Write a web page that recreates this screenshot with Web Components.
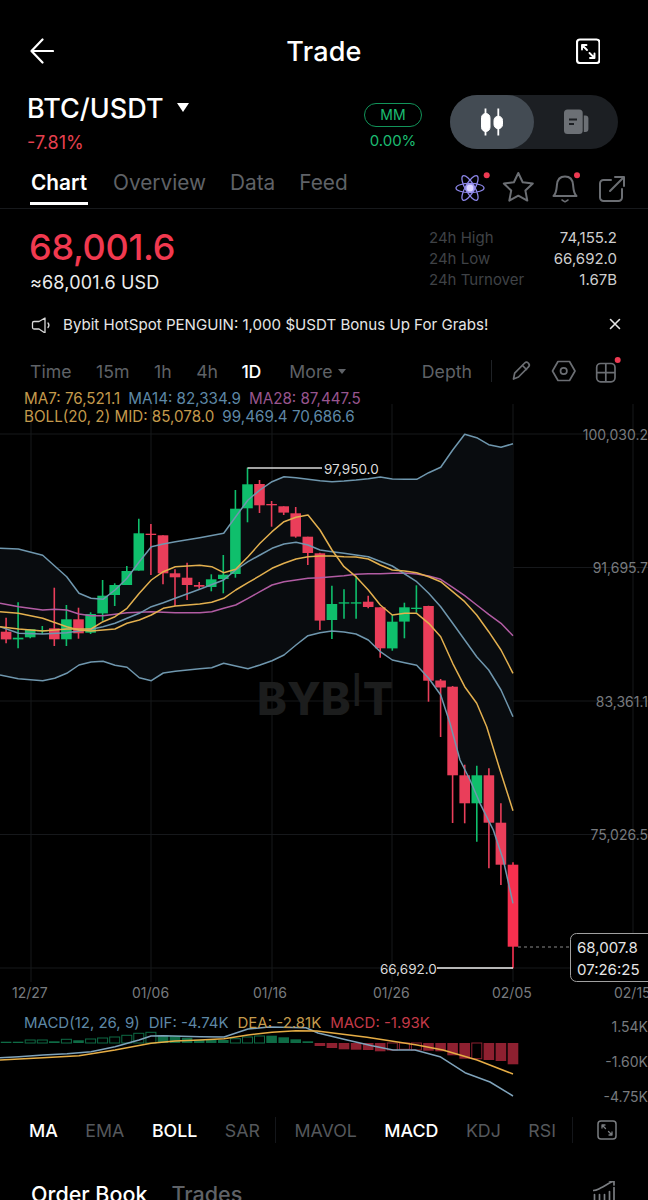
<!DOCTYPE html>
<html>
<head>
<meta charset="utf-8">
<title>Trade</title>
<style>
  html, body { margin: 0; background: #000; height: 1200px; overflow: hidden; }
  body { font-family: Inter, "Liberation Sans", sans-serif; color: #fff; }
</style>
</head>
<body>
<trade-header></trade-header>
<pair-bar></pair-bar>
<tab-bar></tab-bar>
<price-panel></price-panel>
<notice-bar>Bybit HotSpot PENGUIN: 1,000 $USDT Bonus Up For Grabs!</notice-bar>
<interval-bar></interval-bar>
<kline-chart></kline-chart>
<macd-panel></macd-panel>
<indicator-bar></indicator-bar>
<book-tabs></book-tabs>

<script>
 const GRAY = '#5f6267';

 customElements.define('trade-header', class extends HTMLElement {
     constructor() {
         super();
         this.attachShadow({ mode: 'open' }).innerHTML = `
         <style>
          :host { display: grid; grid-template-columns: 1fr auto 1fr; align-items: center; height: 52px; padding: 25px 48px 0 30px; }
          h1 { margin: 0; font-size: 27px; font-weight: 500; letter-spacing: .2px; transform: translateX(9px); }
          svg { display: block; }
          .end { justify-self: end; }
         </style>
         <svg width="24" height="26" viewBox="30 38 24 26" fill="none" stroke="#fff" stroke-width="2.2" stroke-linecap="round" stroke-linejoin="round">
          <path d="M53 51H31.5M42.5 39.5 31.5 51l11 11.5"/>
         </svg>
         <h1>Trade</h1>
         <svg class="end" width="24" height="26" viewBox="576 38 24 26" fill="none" stroke="#fff" stroke-linecap="round" stroke-linejoin="round">
          <rect x="577" y="39.5" width="22.5" height="23.5" rx="3" stroke-width="2.2"/>
          <path stroke-width="1.9" d="M582 45h4.5M582 45v4.5M582 45l5 5M594.5 58H590M594.5 58v-4.5M594.5 58l-5-5"/>
         </svg>`;
     }
 });

 customElements.define('pair-bar', class extends HTMLElement {
     constructor() {
         super();
         this.attachShadow({ mode: 'open' }).innerHTML = `
         <style>
          :host { display: flex; align-items: flex-start; height: 88px; padding-left: 27px; box-sizing: border-box; }
          .pair { flex: 1; padding-top: 15px; }
          .name { display: flex; align-items: center; gap: 13px; font-size: 27px; line-height: 34px; font-weight: 500; }
          .caret { width: 0; height: 0; border: 6.5px solid transparent; border-top: 9px solid #fff; border-bottom: 0; margin-top: -4px; }
          .chg { margin-top: 6px; color: #e5404f; font-size: 18px; line-height: 22px; }
          .mm { width: 58px; margin: 26px 28px 0 0; text-align: center; color: #1cbd72; font-size: 15px; }
          .pill { box-sizing: border-box; height: 24px; border: 1px solid #12945a; border-radius: 12px; font-size: 14px; line-height: 22px; margin-bottom: 3px; }
          .pct { line-height: 22px; }
          .toggle { display: flex; width: 168px; height: 54px; margin: 18px 30px 0 0; background: #1c1f23; border-radius: 27px; }
          .on { display: flex; align-items: center; justify-content: center; width: 84px; background: #434b53; border-radius: 27px; }
          .off { flex: 1; display: flex; align-items: center; justify-content: center; }
         </style>
         <div class="pair">
          <div class="name">BTC/USDT<span class="caret"></span></div>
          <div class="chg">-7.81%</div>
         </div>
         <div class="mm">
          <div class="pill">MM</div>
          <div class="pct">0.00%</div>
         </div>
         <div class="toggle">
          <div class="on">
           <svg width="24" height="28" viewBox="479 108.5 24 28" fill="#fff" stroke="#fff">
            <path stroke-width="1.8" d="M484.5 109v27M497.3 109v27"/>
            <rect x="480.5" y="114" width="8.5" height="18" rx="4.2"/>
            <rect x="493" y="116.7" width="8.5" height="12.5" rx="4.2"/>
           </svg>
          </div>
          <div class="off">
           <svg width="25" height="26" viewBox="563 110 25 26" fill="#6c7075">
            <rect x="563" y="110.5" width="18.7" height="24.5" rx="3.5"/>
            <path d="M582.8 116.5h1.6a3 3 0 0 1 3 3V130a3 3 0 0 1-3 3h-1.6z"/>
            <path stroke="#1c1f23" stroke-width="2" d="M568 120.5h8M568 125h5"/>
           </svg>
          </div>
         </div>`;
     }
 });

 customElements.define('tab-bar', class extends HTMLElement {
     constructor() {
         super();
         this.attachShadow({ mode: 'open' }).innerHTML = `
         <style>
          :host { display: flex; align-items: flex-end; height: 44px; box-sizing: border-box; border-bottom: 1px solid #17191c; padding: 0 20px 0 30px; }
          .tabs { flex: 1; display: flex; gap: 24px; align-self: stretch; }
          .tab { color: ${GRAY}; font-size: 20.8px; line-height: 36px; height: 40px; box-sizing: border-box; }
          .tab.on { color: #fff; font-weight: 600; border-bottom: 3px solid #fff; width: 58px; text-align: center; white-space: nowrap; margin-right: 1px; }
          .tools { display: flex; align-self: center; }
          svg { display: block; }
         </style>
         <div class="tabs">
          <span class="tab on">Chart</span>
          <span class="tab">Overview</span>
          <span class="tab">Data</span>
          <span class="tab">Feed</span>
         </div>
         <div class="tools">
          <svg width="38" height="34" viewBox="452 166 38 34" fill="none" stroke="#8c86e8" stroke-width="1.3">
           <ellipse cx="470" cy="184" rx="14" ry="4.6"/>
           <ellipse cx="470" cy="184" rx="14" ry="4.6" transform="rotate(60 470 184)"/>
           <ellipse cx="470" cy="184" rx="14" ry="4.6" transform="rotate(-60 470 184)"/>
           <circle cx="470" cy="184" r="4" fill="#d9d4ff" stroke="#a59cf5"/>
           <circle cx="486.7" cy="171.3" r="3" fill="#ee3a52" stroke="none"/>
          </svg>
          <svg style="margin-left:10px" width="36" height="34" viewBox="500 166 36 34" fill="none" stroke="#6b6e73" stroke-width="2" stroke-linejoin="round">
           <path d="M518.3 169l4.4 9.3 10.1 1.3-7.4 7 1.9 10-9-4.9-9 4.9 1.9-10-7.4-7 10.1-1.3z"/>
          </svg>
          <svg style="margin-left:12px" width="34" height="34" viewBox="548 166 34 34" fill="none" stroke="#6b6e73" stroke-width="2" stroke-linecap="round" stroke-linejoin="round">
           <path d="M553.5 192c3-3 3-6 3.4-11 .4-5.5 3.6-8.5 8.1-8.5s7.7 3 8.1 8.5c.4 5 .4 8 3.4 11z"/>
           <path stroke-width="1.5" d="M562 196l3 1.8 3-1.8"/>
           <circle cx="577" cy="171.3" r="3" fill="#ee3a52" stroke="none"/>
          </svg>
          <svg style="margin-left:14px" width="32" height="34" viewBox="596 166 32 34" fill="none" stroke="#6b6e73" stroke-width="2" stroke-linecap="round" stroke-linejoin="round">
           <path d="M611 176h-7.5a3.500 3.500 0 0 0-3.500 3.500v14a3.500 3.500 0 0 0 3.500 3.500h15a3.500 3.500 0 0 0 3.500-3.500V185"/>
           <path d="M610 187l13.500-13.500M615 173h9v9"/>
          </svg>
         </div>`;
     }
 });

 customElements.define('price-panel', class extends HTMLElement {
     constructor() {
         super();
         this.attachShadow({ mode: 'open' }).innerHTML = `
         <style>
          :host { display: flex; justify-content: space-between; height: 95px; padding: 15px 31px 0 29px; box-sizing: border-box; }
          .last { color: #f1394f; font-size: 36px; line-height: 46px; font-weight: 500; letter-spacing: -.3px; }
          .usd { font-size: 18px; line-height: 26px; color: #ececec; margin-left: 1px; letter-spacing: .15px; }
          .stats { display: grid; grid-template-columns: auto auto; align-content: start; width: 188px; justify-content: space-between; font-size: 15px; line-height: 21px; margin-top: 3px; }
          .k { color: #3f4246; }
          .v { color: #cfcfcf; text-align: right; }
         </style>
         <div>
          <div class="last">68,001.6</div>
          <div class="usd">≈68,001.6 USD</div>
         </div>
         <div class="stats">
          <span class="k">24h High</span><span class="v">74,155.2</span>
          <span class="k">24h Low</span><span class="v">66,692.0</span>
          <span class="k">24h Turnover</span><span class="v">1.67B</span>
         </div>`;
     }
 });

 customElements.define('notice-bar', class extends HTMLElement {
     constructor() {
         super();
         this.attachShadow({ mode: 'open' }).innerHTML = `
         <style>
          :host { display: flex; align-items: center; height: 40px; padding: 0 27px 0 31px; color: #e6e6e6; font-size: 15.1px; }
          svg { display: block; flex: none; }
          .txt { flex: 1; margin-left: 12px; }
         </style>
         <svg width="20" height="18" viewBox="31 315 20 18" fill="none" stroke="#d8d8d8" stroke-width="1.3" stroke-linejoin="round" stroke-linecap="round">
          <path d="M45 318v15l-6-4h-5a1.500 1.500 0 0 1-1.500-1.500v-4.500a1.500 1.500 0 0 1 1.500-1.500h5z"/>
          <path d="M48 323a3.500 3.500 0 0 1 0 4.500"/>
         </svg>
         <span class="txt"><slot></slot></span>
         <svg width="12" height="12" viewBox="0 0 12 12" fill="none" stroke="#e6e6e6" stroke-width="1.6" stroke-linecap="round">
          <path d="M1.500 1.500l9 9M10.500 1.500l-9 9"/>
         </svg>`;
     }
 });

 customElements.define('interval-bar', class extends HTMLElement {
     constructor() {
         super();
         this.attachShadow({ mode: 'open' }).innerHTML = `
         <style>
          :host { display: flex; align-items: center; height: 46px; padding: 8px 27px 0 30px; box-sizing: border-box; font-size: 17.7px; color: ${GRAY}; }
          .times { flex: 1; display: flex; gap: 24.5px; align-items: center; }
          .on { color: #fff; font-weight: 500; margin-left: -1px; letter-spacing: -.4px; }
          .more { display: flex; align-items: center; gap: 5px; margin-left: 4px; }
          .more i { width: 0; height: 0; border: 4.5px solid transparent; border-top: 5.5px solid ${GRAY}; border-bottom: 0; }
          .sep { width: 1px; height: 22px; background: #1f2226; margin: 0 4px 0 19px; }
          svg { display: block; }
         </style>
         <div class="times">
          <span>Time</span><span>15m</span><span>1h</span><span>4h</span><span class="on">1D</span>
          <span class="more">More<i></i></span>
         </div>
         <span>Depth</span>
         <span class="sep"></span>
         <svg style="margin-left:14px" width="23" height="26" viewBox="510 358 23 26" fill="none" stroke="#6b6e73" stroke-width="1.7" stroke-linejoin="round" stroke-linecap="round">
          <path d="M513.500 379l1.200-5.800 10-10.200a2.500 2.500 0 0 1 3.500 0l.3.300a2.500 2.500 0 0 1 0 3.500l-10 10.200z"/>
          <path d="M522.500 365.500l4 4"/>
         </svg>
         <svg style="margin-left:18px" width="26" height="26" viewBox="551 358 26 26" fill="none" stroke="#6b6e73" stroke-width="1.7" stroke-linejoin="round">
          <path d="M558 361.500h11.500l5.500 9.500-5.500 9.500H558l-5.500-9.500z"/>
          <circle cx="563.700" cy="371" r="3.2"/>
         </svg>
         <svg style="margin-left:18px" width="26" height="28" viewBox="595 356 26 28" fill="none" stroke="#6b6e73" stroke-width="1.7">
          <rect x="596.700" y="362.500" width="18.300" height="18.300" rx="4"/>
          <path d="M605.800 362.500v18.300M596.700 371.600H615"/>
          <circle cx="617.700" cy="359" r="3" fill="#ee3a52" stroke="none"/>
         </svg>`;
     }
 });

 // candle x from its distance to the newest candle
 const candleX = k => 513 - 12.07 * k;
 const ry = v => 430 + v / 3;
 // [top, bottom, wick top, wick bottom, colour], k = 42 down to 7, read off the crops
 const CANDLES = [
     [605, 628, 563, 640, 'r'], [623, 628, 517, 655, 'g'], [598, 622, 598, 625, 'g'], [600, 604, 588, 612, 'g'],
     [595, 628, 473, 648, 'r'], [568, 628, 525, 648, 'g'], [568, 610, 533, 626, 'r'], [552, 608, 547, 612, 'g'],
     [497, 550, 450, 572, 'g'], [465, 495, 460, 528, 'g'], [423, 465, 408, 465, 'g'], [310, 422, 266, 422, 'g'],
     [311, 315, 282, 435, 'r'], [316, 430, 316, 463, 'r'], [430, 442, 418, 528, 'r'], [443, 465, 398, 510, 'r'],
     [465, 470, 456, 476, 'r'], [448, 471, 433, 484, 'g'], [434, 447, 375, 490, 'g'], [236, 432, 180, 443, 'g'],
     [163, 235, 113, 277, 'g'], [162, 226, 150, 249, 'r'], [222, 226, 213, 290, 'r'], [229, 248, 229, 255, 'r'],
     [250, 320, 231, 323, 'r'], [320, 369, 320, 405, 'r'], [370, 572, 368, 600, 'r'], [522, 570, 467, 627, 'g'],
     [517, 521, 478, 566, 'g'], [517, 521, 437, 566, 'g'], [515, 531, 497, 535, 'r'], [532, 655, 532, 683, 'r'],
     [575, 655, 555, 662, 'g'], [532, 575, 518, 625, 'g'], [533, 537, 466, 548, 'g'], [528, 752, 527, 815, 'r']
 ].map(c => [ry(c[0]), ry(c[1]), ry(c[2]), ry(c[3]), c[4]]).concat([
     // k = 6 to 0, already in page pixels
     [680.5, 687.5, 679, 737, 'r'], [686.7, 775.3, 686, 823, 'r'], [775.3, 803.3, 764.7, 823.3, 'r'],
     [775.3, 803.3, 765.7, 841.7, 'g'], [775.3, 822.7, 768.3, 868.3, 'r'], [822.7, 864.7, 803.3, 885, 'r'],
     [864.7, 946.7, 862.3, 968.3, 'R']
 ]);
 const CANDLE_COLOR = { g: '#0fbf6c', r: '#ea3e5a', R: '#f7304f' };

 const left = list => { const out = []; for (let i = 0; i < list.length; i += 2) out.push([list[i] / 3, ry(list[i + 1])]); return out; };
 const right = list => { const out = []; for (let i = 0; i < list.length; i += 2) out.push([320 + list[i] / 3, ry(list[i + 1])]); return out; };
 const low = list => { const out = []; for (let i = 0; i < list.length; i += 2) out.push([360 + list[i] / 3, 690 + list[i + 1] / 3]); return out; };
 const pts = list => list.map(p => p[0].toFixed(1) + ',' + p[1].toFixed(1)).join(' ');

 const UPPER = left([0,355, 55,357, 128,376, 200,440, 237,490, 273,505, 309,508, 345,480, 381,445, 418,395, 454,350, 490,342, 526,335, 599,323, 671,310, 707,260, 744,210, 780,180, 816,155, 852,140, 888,143, 960,152])
     .concat(right([36,155, 72,153, 108,150, 145,146, 181,141, 217,147, 254,148, 290,148, 326,128, 362,112, 398,60, 434,13, 470,23, 506,44, 543,52, 579,41]));
 const LOWER = left([0,735, 55,746, 128,752, 164,745, 200,730, 237,705, 273,696, 309,694, 345,706, 381,712, 418,743, 454,752, 490,729, 526,724, 599,716, 635,713, 671,700, 707,708, 744,716, 780,705, 816,692, 852,675, 888,645, 924,617, 960,608])
     .concat(right([36,603, 72,606, 108,612, 145,630, 181,665, 217,690, 254,698, 290,706, 326,745, 362,795]))
     .concat(low([270,100, 300,210, 330,270, 360,340, 400,420, 430,510, 459,640]));
 const BOLL_MID = left([0,545, 55,550, 128,565, 200,590, 237,600, 273,603, 345,597, 381,580, 418,570, 454,555, 490,535, 526,528, 599,522, 635,517, 671,505, 707,480, 744,458, 780,437, 816,415, 852,400, 888,387, 924,380, 960,378])
     .concat(right([36,378, 72,380, 108,381, 145,387, 181,405, 217,420, 254,423, 290,428, 326,440, 362,455, 398,485, 434,515, 470,555, 506,605, 543,660, 579,730]));
 const MA7 = left([0,590, 56,597, 128,603, 200,597, 237,597, 273,597, 309,575, 345,560, 381,535, 418,490, 454,450, 490,425, 526,410, 599,406, 635,410, 671,428, 707,418, 744,380, 780,340, 816,305, 852,275, 888,262, 924,255, 960,300])
     .concat(right([36,360, 72,410, 108,440, 145,480, 181,525, 217,555, 254,550, 290,550, 326,580, 362,620, 398,700, 434,770]))
     .concat(low([350,40, 380,110, 420,240, 459,362]));
 const MA14 = left([0,590, 56,610, 128,612, 200,608, 273,598, 309,590, 345,580, 381,565, 418,550, 454,530, 490,518, 526,505, 599,478, 671,450, 707,420, 744,395, 780,375, 816,355, 852,342, 888,337, 924,345, 960,360])
     .concat(right([36,365, 72,370, 108,375, 145,380, 217,408, 290,455, 326,490, 362,530, 398,580, 434,630, 470,680, 506,720, 543,780, 579,860]));
 const MA28 = left([0,520, 56,530, 128,540, 164,538, 200,540, 237,552, 273,557, 309,557, 345,553, 381,548, 418,547, 454,545, 490,547, 526,548, 599,548, 635,545, 671,535, 707,525, 744,505, 780,485, 816,465, 852,455, 888,450, 924,445, 960,443])
     .concat(right([36,440, 72,437, 108,433, 145,431, 181,431, 217,430, 254,429, 290,432, 326,438, 362,448, 398,472, 434,497, 470,525, 506,553, 543,580, 579,617]));

 customElements.define('kline-chart', class extends HTMLElement {
     constructor() {
         super();
         const grid = [31, 151, 272, 392, 513, 633].map(x => `<path d="M${x} 404V982"/>`).join('')
             + [434, 567.5, 701, 834.5, 968].map(y => `<path d="M0 ${y}H648"/>`).join('');
         const candles = CANDLES.map((c, i) => {
             const x = candleX(42 - i);
             const col = CANDLE_COLOR[c[4]];
             return `<path d="M${x.toFixed(1)} ${c[2].toFixed(1)}V${c[3].toFixed(1)}" stroke="${col}" stroke-width="1.6"/>`
                 + `<rect x="${(x - 5.3).toFixed(1)}" y="${c[0].toFixed(1)}" width="10.6" height="${(c[1] - c[0]).toFixed(1)}" fill="${col}"/>`;
         }).join('');
         const band = pts(UPPER) + ' ' + pts(LOWER.slice().reverse());
         const axis = [['100,030.2', 440], ['91,695.7', 573], ['83,361.1', 707], ['75,026.5', 840]]
             .map(a => `<text x="648" y="${a[1]}" text-anchor="end">${a[0]}</text>`).join('');
         const dates = [['12/27', 12], ['01/06', 132], ['01/16', 253], ['01/26', 373], ['02/05', 492], ['02/15', 614]]
             .map(d => `<text x="${d[1]}" y="998">${d[0]}</text>`).join('');
         this.attachShadow({ mode: 'open' }).innerHTML = `
         <style>
          :host { display: block; position: relative; height: 618px; }
          svg { display: block; }
          .legend { position: absolute; left: 24px; top: 0; font-size: 15.2px; line-height: 18px; white-space: nowrap; }
          .a { color: #c49a4c; } .b { color: #5e88a6; } .c { color: #98558e; }
          .legend span { margin-right: 8px; }
          text { font-family: Inter, "Liberation Sans", sans-serif; }
         </style>
         <svg width="648" height="618" viewBox="0 390 648 618">
          <g stroke="#16181b" fill="none">${grid}</g>
          <polygon points="${band}" fill="#090c0f"/>
          <text x="257" y="715" fill="#1c1d1d" font-size="45" font-weight="800">BYB<tspan dy="-9" font-weight="400" font-size="45">I</tspan><tspan dy="9">T</tspan></text>
          ${candles}
          <g fill="none" stroke-width="1.5" stroke-linejoin="round">
           <polyline points="${pts(MA28)}" stroke="#b25ca3"/>
           <polyline points="${pts(MA14)}" stroke="#6f97ae"/>
           <polyline points="${pts(BOLL_MID)}" stroke="#e3b04f"/>
           <polyline points="${pts(MA7)}" stroke="#e3b04f"/>
           <polyline points="${pts(UPPER)}" stroke="#6f97ae"/>
           <polyline points="${pts(LOWER)}" stroke="#6f97ae"/>
          </g>
          <path d="M247.500 468H322" stroke="#d8d8d8" stroke-width="1.5"/>
          <text x="324" y="474" fill="#dcdcdc" font-size="13.5">97,950.0</text>
          <path d="M437 968H513" stroke="#f0f0f0" stroke-width="1.5"/>
          <text x="380" y="973.5" fill="#dcdcdc" font-size="13.5">66,692.0</text>
          <path d="M518 947H570" stroke="#8a8a8a" stroke-dasharray="3 3"/>
          <rect x="570.5" y="933.5" width="90" height="48" rx="6" fill="#000" stroke="#a0a0a0"/>
          <text x="577" y="953" fill="#e6e6e6" font-size="15">68,007.8</text>
          <text x="577" y="975" fill="#e6e6e6" font-size="15">07:26:25</text>
          <g fill="#777a7e" font-size="14">${axis}${dates}</g>
         </svg>
         <div class="legend">
          <div><span class="a">MA7: 76,521.1</span><span class="b">MA14: 82,334.9</span><span class="c">MA28: 87,447.5</span></div>
          <div><span class="a">BOLL(20, 2) MID: 85,078.0</span><span class="b">99,469.4 70,686.6</span></div>
         </div>`;
     }
 });

 // histogram: [k, edge of the bar in crop px, hollow]
 const GREEN_BARS = [[42,35],[41,35],[40,30,1],[39,30,1],[38,34],[37,28,1],[36,31],[35,27,1],[34,24,1],[33,21,1],[32,16,1],[31,10,1],[30,7,1],[29,15],[28,17],[27,23],[26,29],[25,30],[24,30],[23,26,1],[22,21,1],[21,18,1],[20,17],[19,22],[18,28],[17,34]];
 const RED_BARS = [[16,48],[15,54],[14,58],[13,59],[12,60],[11,64],[10,60,1],[9,58,1],[8,60,1],[7,62],[6,64],[5,76],[4,86],[3,86,1],[2,90],[1,93],[0,103]];
 const cy = v => 1030 + v / 3;
 const DIF = [[0,1057.7],[19,1056.7],[43,1055],[67,1053.7],[91,1051.7],[115,1046.7],[139,1040],[151,1036],[163,1035.7],[200,1036.7],[224,1037],[248,1029],[269,1027],[306,1027.7],[318,1033],[347,1040],[372,1045.7],[393,1050],[415,1050],[440,1056.7],[465,1072.7],[490,1082],[513,1096]];
 const DEA = [[0,1060],[43,1057.7],[79,1055.7],[115,1050],[151,1043.3],[175,1041],[200,1040],[224,1038.7],[248,1035],[272,1032.3],[296,1030.7],[317,1031],[367,1037.3],[417,1045],[443,1050],[477,1060],[513,1074]];

 customElements.define('macd-panel', class extends HTMLElement {
     constructor() {
         super();
         const bars = GREEN_BARS.map(b => {
             const x = candleX(b[0]);
             const y = cy(b[1]);
             const h = 1043 - y;
             return b[2]
                 ? `<rect x="${(x - 5).toFixed(1)}" y="${y.toFixed(1)}" width="10" height="${h.toFixed(1)}" fill="none" stroke="#0e6b45" stroke-width="1"/>`
                 : `<rect x="${(x - 5.3).toFixed(1)}" y="${y.toFixed(1)}" width="10.6" height="${h.toFixed(1)}" fill="#0e6b45"/>`;
         }).join('') + RED_BARS.map(b => {
             const x = candleX(b[0]);
             const h = cy(b[1]) - 1043;
             return b[2]
                 ? `<rect x="${(x - 5).toFixed(1)}" y="1043" width="10" height="${h.toFixed(1)}" fill="none" stroke="#8e2030" stroke-width="1"/>`
                 : `<rect x="${(x - 5.3).toFixed(1)}" y="1043" width="10.6" height="${h.toFixed(1)}" fill="#8e2030"/>`;
         }).join('');
         this.attachShadow({ mode: 'open' }).innerHTML = `
         <style>
          :host { display: block; position: relative; height: 100px; }
          svg { display: block; }
          .legend { position: absolute; left: 24px; top: 6px; font-size: 15px; line-height: 18px; white-space: nowrap; color: #5e88a6; }
          .legend span { margin-right: 9px; }
          .a { color: #c49a4c; } .r { color: #c43a48; }
          text { font-family: Inter, "Liberation Sans", sans-serif; }
         </style>
         <svg width="648" height="100" viewBox="0 1008 648 100">
          ${bars}
          <g fill="none" stroke-width="1.5" stroke-linejoin="round">
           <polyline points="${pts(DIF)}" stroke="#7fa3bb"/>
           <polyline points="${pts(DEA)}" stroke="#e6ad45"/>
          </g>
          <g fill="#777a7e" font-size="14" text-anchor="end">
           <text x="648" y="1032">1.54K</text>
           <text x="648" y="1067">-1.60K</text>
           <text x="648" y="1102">-4.75K</text>
          </g>
         </svg>
         <div class="legend"><span>MACD(12, 26, 9)</span><span>DIF: -4.74K</span><span class="a">DEA: -2.81K</span><span class="r">MACD: -1.93K</span></div>`;
     }
 });

 customElements.define('indicator-bar', class extends HTMLElement {
     constructor() {
         super();
         this.attachShadow({ mode: 'open' }).innerHTML = `
         <style>
          :host { display: flex; align-items: center; height: 44px; padding-left: 29px; font-size: 17.8px; color: #55585c; }
          .on { color: #fff; font-weight: 500; }
          span { margin-right: 27.5px; }
          .sep { width: 1px; height: 26px; background: #14161a; margin: 0 18px 0 -12px; }
          svg { display: block; margin-left: 6px; }
         </style>
         <span class="on">MA</span><span>EMA</span><span class="on">BOLL</span><span>SAR</span>
         <span class="sep"></span>
         <span>MAVOL</span><span class="on">MACD</span><span>KDJ</span><span>RSI</span>
         <span class="sep"></span>
         <svg width="20" height="20" viewBox="596 1120.5 20 20" fill="none" stroke="#7a7d81" stroke-linecap="round" stroke-linejoin="round">
          <rect x="597" y="1121.5" width="18" height="18" rx="3" stroke-width="1.5"/>
          <path stroke-width="1.3" d="M601 1125.500h3M601 1125.500v3M601 1125.500l3.500 3.500M611 1135.500h-3M611 1135.500v-3M611 1135.500l-3.500-3.500"/>
         </svg>`;
     }
 });

 customElements.define('book-tabs', class extends HTMLElement {
     constructor() {
         super();
         this.attachShadow({ mode: 'open' }).innerHTML = `
         <style>
          :host { display: flex; align-items: flex-start; height: 48px; overflow: hidden; padding: 28px 33px 0 31px; box-sizing: border-box; font-size: 21.5px; line-height: 28px; }
          .on { font-weight: 500; }
          .off { color: ${GRAY}; margin-left: 24px; flex: 1; font-weight: 500; }
          svg { display: block; margin-top: 1px; }
         </style>
         <span class="on">Order Book</span><span class="off">Trades</span>
         <svg width="22" height="19" viewBox="593.5 1181.5 22 19" fill="none" stroke="#7a7d81" stroke-width="1.7" stroke-linecap="round" stroke-linejoin="round">
          <path d="M594 1191c3 0 4-1 7-2.500 4-2 7-4 13-7M610 1181.500h4.500v4"/>
          <path d="M595 1201v-6M600 1201v-6M605 1201v-6M610 1201v-9M614.500 1201v-13"/>
         </svg>`;
     }
 });
</script>
</body>
</html>
